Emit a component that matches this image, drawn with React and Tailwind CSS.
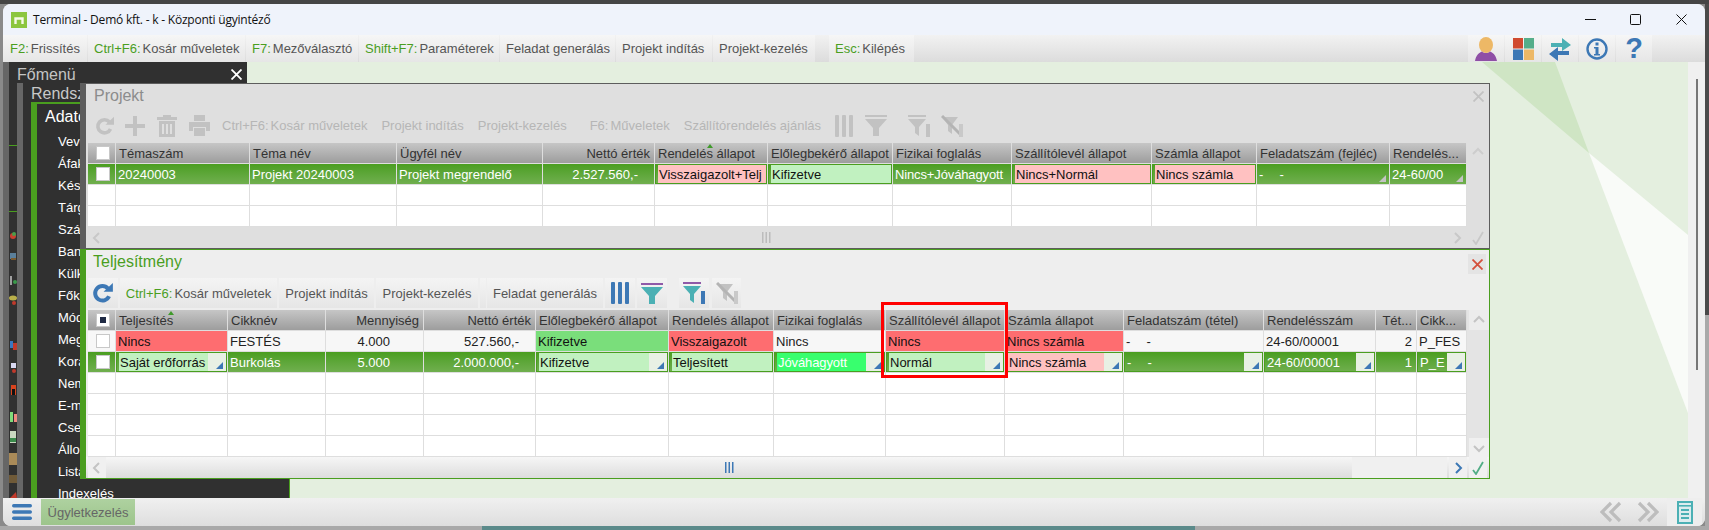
import React from "react";

const BLUE = "#3d78b5";
const TEAL = "#4bb0b4";
const PURPLE = "#8f5aa8";
const OFF = "#c2c2c2";

function Redo({ c = BLUE, size = 20 }) {
  return (
    <svg width={size} height={size} viewBox="0 0 20 20" fill="none">
      <path d="M14.5 6A6.6 6.6 0 1 0 15.5 13" stroke={c} strokeWidth="3.6" />
      <polygon points="10.5,8.8 19,8.8 19,0.8" fill={c} />
    </svg>
  );
}
function Plus() {
  return (
    <svg width="20" height="20" viewBox="0 0 20 20" fill={OFF}>
      <rect x="8" y="0" width="4" height="20" />
      <rect x="0" y="8" width="20" height="4" />
    </svg>
  );
}
function Trash() {
  return (
    <svg width="20" height="22" viewBox="0 0 20 22" fill={OFF}>
      <rect x="6" y="0" width="8" height="2" />
      <rect x="0" y="2" width="20" height="3" />
      <path d="M2 6h16v16H2zM5 9v10h2V9zM9 9v10h2V9zM13 9v10h2V9z" fillRule="evenodd" />
    </svg>
  );
}
function Printer() {
  return (
    <svg width="21" height="21" viewBox="0 0 21 21" fill={OFF}>
      <rect x="5" y="0" width="11" height="6" />
      <path d="M0 7h21v9h-4v-4H4v4H0z" />
      <rect x="5" y="13" width="11" height="8" />
    </svg>
  );
}
function Columns({ c = BLUE }) {
  return (
    <svg width="18" height="22" viewBox="0 0 18 22" fill={c}>
      <rect x="0" y="0" width="4" height="22" rx="1" />
      <rect x="7" y="0" width="4" height="22" rx="1" />
      <rect x="14" y="0" width="4" height="22" rx="1" />
    </svg>
  );
}
function Funnel({ top = PURPLE, c = TEAL }) {
  return (
    <svg width="22" height="21" viewBox="0 0 22 21">
      <rect x="0" y="0" width="22" height="2" fill={top} />
      <polygon points="0,4 22,4 14,13 14,21 8,21 8,13" fill={c} />
    </svg>
  );
}
function FunnelList({ top = PURPLE, c = TEAL, r = BLUE }) {
  return (
    <svg width="22" height="22" viewBox="0 0 22 22">
      <rect x="0" y="0" width="18" height="2" fill={top} />
      <polygon points="0,4 18,4 11,12 11,21 7,18 7,12" fill={c} />
      <rect x="18" y="9" width="4" height="13" fill={r} />
    </svg>
  );
}
function FunnelOff() {
  return (
    <svg width="22" height="22" viewBox="0 0 22 22">
      <polygon points="1,2 17,2 11,10 11,19 7,16 7,10" fill={OFF} />
      <path d="M1 1 L20 20" stroke="#b4b4b4" strokeWidth="3" />
      <rect x="18" y="9" width="4" height="13" fill="#c9c9c9" />
    </svg>
  );
}
function Chevron({ dir, c = "#c4c4c4" }) {
  const d = { up: "M2 9l5-5 5 5", down: "M2 5l5 5 5-5", left: "M9 2L4 7l5 5", right: "M5 2l5 5-5 5" }[dir];
  return (
    <svg width="14" height="14" viewBox="0 0 14 14" fill="none">
      <path d={d} stroke={c} strokeWidth="2" />
    </svg>
  );
}
function Check({ c }) {
  return (
    <svg width="12" height="14" viewBox="0 0 12 14" fill="none">
      <path d="M1 9l3 4 7-12" stroke={c} strokeWidth="1.8" />
    </svg>
  );
}
function Grip({ c }) {
  return (
    <svg width="9" height="11" viewBox="0 0 9 11" fill={c}>
      <rect x="0" y="0" width="1.5" height="11" />
      <rect x="3.5" y="0" width="1.5" height="11" />
      <rect x="7" y="0" width="1.5" height="11" />
    </svg>
  );
}
function Tri({ c = BLUE }) {
  return (
    <svg width="7" height="7" viewBox="0 0 7 7">
      <polygon points="7,0 7,7 0,7" fill={c} />
    </svg>
  );
}

function Key({ k, t }) {
  return (
    <>
      {k && <span className="mr-[2px] text-[#4a9e1f]">{k}</span>}
      {t}
    </>
  );
}

function TopBtn({ k, t, className = "" }) {
  return (
    <div className={`flex h-full items-center whitespace-nowrap bg-linear-to-b from-[#f6f6f6] to-[#e6e6e6] px-[6px] ${className}`}>
      <Key k={k} t={t} />
    </div>
  );
}

function IconBtn({ children }) {
  return <div className="mr-[1px] flex h-full w-[36px] items-center justify-center bg-linear-to-b from-[#f6f6f6] to-[#e6e6e6]">{children}</div>;
}

function CheckBox({ mixed }) {
  return (
    <div className="mx-auto flex h-[14px] w-[14px] items-center justify-center border border-[#c8c8c8] bg-white">
      {mixed && <div className="h-[6px] w-[6px] bg-[#1f2a44]" />}
    </div>
  );
}

function Sort() {
  return (
    <svg className="absolute left-[52px] top-[1px]" width="6" height="4" viewBox="0 0 6 4">
      <polygon points="3,0 6,4 0,4" fill="#3f9a2a" />
    </svg>
  );
}

function Head({ children, right, sort }) {
  return (
    <div className={`relative flex items-center overflow-hidden whitespace-nowrap border-r border-b border-[#dedede] bg-linear-to-b from-[#c6c6c6] to-[#9d9d9d] text-[#333] ${right ? "justify-end pr-[4px]" : "pl-[3px]"}`}>
      {children}
      {sort && <Sort />}
    </div>
  );
}

function Cell({ children, tone = "", right, pr = "", drop, tri, boxed }) {
  return (
    <div className={`flex min-w-0 overflow-hidden whitespace-nowrap border-r border-b border-[#dedede] ${tone}`}>
      <div className={`flex min-w-0 flex-1 overflow-hidden ${boxed ? "border border-[#4a9e1f]" : ""}`}>
        <div className={`flex min-w-0 flex-1 items-center overflow-hidden ${right ? `justify-end ${pr}` : "pl-[2px]"}`}>{children}</div>
        {drop && (
          <div className="flex w-[18px] shrink-0 items-end justify-end bg-[#e8f0e4] pr-[3px] pb-[2px]">
            <Tri />
          </div>
        )}
        {tri && (
          <div className="flex w-[18px] shrink-0 items-end justify-end pr-[3px] pb-[2px]">
            <Tri c="#c4c4c4" />
          </div>
        )}
      </div>
    </div>
  );
}

function Dashes() {
  return <span className="whitespace-pre tracking-[-0.3px]">-     -</span>;
}

const SEL = "bg-linear-to-b from-[#4a9e1f] to-[#70af4e] text-white";
const LG = "bg-[#c1f1c0] text-[#111]";
const LR = "bg-[#ffc1c1] text-[#111]";
const RED = "bg-[#fe6d70] text-[#111]";
const PLAIN = "bg-[#f7f7f7] text-[#222]";

const topHeads = ["Témaszám", "Téma név", "Ügyfél név"];

function Empty({ n }) {
  return Array.from({ length: n }, (_, i) => <div key={i} className="border-r border-b border-[#dedede] bg-white" />);
}

function ProjektWindow() {
  return (
    <section className="absolute left-[77px] top-[21px] z-10 flex h-[166px] w-[1410px] flex-col border-t border-r border-b border-l-[6px] border-[#5d5d5d] bg-[#dfdfdf]">
      <div className="flex h-[24px] items-center justify-between pl-[8px] pr-[5px] text-[16px] text-[#8c8c8c]">
        <span>Projekt</span>
        <svg width="11" height="11" viewBox="0 0 11 11" fill="none">
          <path d="M0.5 0.5l10 10M10.5 0.5l-10 10" stroke="#c2c2c2" strokeWidth="1.8" />
        </svg>
      </div>
      <div className="flex h-[35px] items-center pl-[9px] text-[#b6b6b6]">
        <Redo c={OFF} />
        <div className="ml-[10px]"><Plus /></div>
        <div className="ml-[12px]"><Trash /></div>
        <div className="ml-[12px]"><Printer /></div>
        <span className="ml-[12px] whitespace-nowrap"><span className="mr-[2px]">Ctrl+F6:</span>Kosár műveletek</span>
        <span className="ml-[14px] whitespace-nowrap">Projekt indítás</span>
        <span className="ml-[14px] whitespace-nowrap">Projekt-kezelés</span>
        <span className="ml-[23px] whitespace-nowrap"><span className="mr-[2px]">F6:</span>Műveletek</span>
        <span className="ml-[14px] whitespace-nowrap">Szállítórendelés ajánlás</span>
        <div className="ml-[14px]"><Columns c={OFF} /></div>
        <div className="ml-[12px]"><Funnel top={OFF} c={OFF} /></div>
        <div className="ml-[21px]"><FunnelList top={OFF} c={OFF} r={OFF} /></div>
        <div className="ml-[11px]"><FunnelOff /></div>
      </div>
      <div className="flex h-[84px] pl-[2px]">
        <div className="grid w-[1379px] grid-cols-[28px_134px_147px_146px_112px_113px_125px_119px_140px_105px_133px_77px] auto-rows-[21px]">
          <Head><CheckBox /></Head>
          {topHeads.map((h) => <Head key={h}>{h}</Head>)}
          <Head right>Nettó érték</Head>
          <Head sort>Rendelés állapot</Head>
          <Head>Előlegbekérő állapot</Head>
          <Head>Fizikai foglalás</Head>
          <Head>Szállítólevél állapot</Head>
          <Head>Számla állapot</Head>
          <Head>Feladatszám (fejléc)</Head>
          <Head>Rendelés...</Head>

          <Cell tone={SEL}><div className="w-full"><CheckBox /></div></Cell>
          <Cell tone={SEL}>20240003</Cell>
          <Cell tone={SEL}>Projekt 20240003</Cell>
          <Cell tone={SEL}>Projekt megrendelő</Cell>
          <Cell tone={SEL} right pr="pr-[16px]">2.527.560,-</Cell>
          <Cell tone={SEL + " !text-[#111]"} boxed><div className={`flex h-full w-full items-center overflow-hidden pl-[1px] ${LR}`}>Visszaigazolt+Telj</div></Cell>
          <Cell tone={SEL + " !text-[#111]"} boxed><div className={`flex h-full w-full items-center pl-[1px] ${LG}`}>Kifizetve</div></Cell>
          <Cell tone={SEL}><span className="tracking-[-0.13px]">Nincs+Jóváhagyott</span></Cell>
          <Cell tone={SEL + " !text-[#111]"} boxed><div className={`flex h-full w-full items-center pl-[1px] ${LR}`}>Nincs+Normál</div></Cell>
          <Cell tone={SEL + " !text-[#111]"} boxed><div className={`flex h-full w-full items-center pl-[1px] ${LR}`}>Nincs számla</div></Cell>
          <Cell tone={SEL} tri><Dashes /></Cell>
          <Cell tone={SEL} tri>24-60/00</Cell>

          <Empty n={24} />
        </div>
        <div className="flex w-[22px] justify-center pt-[2px]"><Chevron dir="up" c="#cdcdcd" /></div>
      </div>
      <div className="flex h-[21px] items-center pl-[4px] pr-[5px]">
        <Chevron dir="left" c="#c8c8c8" />
        <div className="ml-[658px]"><Grip c="#bcbcbc" /></div>
        <div className="ml-auto flex items-center gap-[8px]">
          <Chevron dir="right" c="#c8c8c8" />
          <Check c="#c8c8c8" />
        </div>
      </div>
    </section>
  );
}

function BarBtn({ children, className = "" }) {
  return <div className={`flex h-[30px] items-center justify-center whitespace-nowrap bg-linear-to-b from-[#f4f4f4] to-[#e6e6e6] ${className}`}>{children}</div>;
}

function TeljesitmenyWindow() {
  return (
    <section className="absolute left-[77px] top-[187px] z-10 flex h-[230px] w-[1410px] flex-col border-t border-r border-b border-l-[6px] border-[#4a9e1f] bg-[#eeeeee]">
      <div className="flex h-[28px] items-center justify-between pl-[7px] pr-[3px] text-[16px] text-[#4a9e1f]">
        <span className="mb-[4px]">Teljesítmény</span>
        <div className="flex h-[20px] w-[18px] items-center justify-center bg-[#e4e4e4]">
          <svg width="11" height="11" viewBox="0 0 11 11" fill="none">
            <path d="M0.5 0.5l10 10M10.5 0.5l-10 10" stroke="#d4503c" strokeWidth="1.8" />
          </svg>
        </div>
      </div>
      <div className="flex h-[32px] items-start pl-[2px] text-[#555]">
        <BarBtn className="w-[30px]"><Redo size={22} /></BarBtn>
        <BarBtn className="ml-[2px] w-[157px]"><Key k="Ctrl+F6:" t="Kosár műveletek" /></BarBtn>
        <BarBtn className="ml-[2px] w-[95px]">Projekt indítás</BarBtn>
        <BarBtn className="ml-[2px] w-[102px]">Projekt-kezelés</BarBtn>
        <BarBtn className="ml-[2px] w-[6px]" />
        <BarBtn className="ml-[1px] w-[116px]">Feladat generálás</BarBtn>
        <BarBtn className="ml-[2px] w-[30px]"><Columns /></BarBtn>
        <BarBtn className="ml-[2px] w-[30px]"><Funnel /></BarBtn>
        <BarBtn className="ml-[12px] w-[30px]"><FunnelList /></BarBtn>
        <BarBtn className="ml-[3px] w-[29px]"><FunnelOff /></BarBtn>
      </div>
      <div className="flex h-[147px] pl-[2px]">
        <div className="grid w-[1379px] grid-cols-[28px_112px_98px_98px_112px_133px_105px_112px_119px_119px_140px_112px_41px_50px] auto-rows-[21px]">
          <Head><CheckBox mixed /></Head>
          <Head sort>Teljesítés</Head>
          <Head>Cikknév</Head>
          <Head right>Mennyiség</Head>
          <Head right>Nettó érték</Head>
          <Head>Előlegbekérő állapot</Head>
          <Head>Rendelés állapot</Head>
          <Head>Fizikai foglalás</Head>
          <Head>Szállítólevél állapot</Head>
          <Head>Számla állapot</Head>
          <Head>Feladatszám (tétel)</Head>
          <Head>Rendelésszám</Head>
          <Head right>Tét...</Head>
          <Head>Cikk...</Head>

          <Cell tone={PLAIN}><div className="w-full"><CheckBox /></div></Cell>
          <Cell tone={RED}>Nincs</Cell>
          <Cell tone={PLAIN}>FESTÉS</Cell>
          <Cell tone={PLAIN} right pr="pr-[33px]">4.000</Cell>
          <Cell tone={PLAIN} right pr="pr-[16px]">527.560,-</Cell>
          <Cell tone="bg-[#7ade7b] text-[#111]">Kifizetve</Cell>
          <Cell tone={RED}>Visszaigazolt</Cell>
          <Cell tone={PLAIN}>Nincs</Cell>
          <Cell tone={RED}>Nincs</Cell>
          <Cell tone={RED}>Nincs számla</Cell>
          <Cell tone={PLAIN}><Dashes /></Cell>
          <Cell tone={PLAIN}>24-60/00001</Cell>
          <Cell tone={PLAIN} right pr="pr-[4px]">2</Cell>
          <Cell tone={PLAIN}>P_FES</Cell>

          <Cell tone={SEL}><div className="w-full"><CheckBox /></div></Cell>
          <Cell tone={`${SEL} !text-[#111]`} boxed drop><div className={`flex h-full w-full items-center pl-[1px] ${LG}`}>Saját erőforrás</div></Cell>
          <Cell tone={SEL}>Burkolás</Cell>
          <Cell tone={SEL} right pr="pr-[33px]">5.000</Cell>
          <Cell tone={SEL} right pr="pr-[16px]">2.000.000,-</Cell>
          <Cell tone={`${SEL} !text-[#111]`} boxed drop><div className={`flex h-full w-full items-center pl-[1px] ${LG}`}>Kifizetve</div></Cell>
          <Cell tone={`${SEL} !text-[#111]`} boxed><div className={`flex h-full w-full items-center pl-[1px] ${LG}`}>Teljesített</div></Cell>
          <Cell tone={SEL} boxed drop><div className="flex h-full w-full items-center bg-[#38ff6e] pl-[1px] tracking-[-0.1px]">Jóváhagyott</div></Cell>
          <Cell tone={`${SEL} !text-[#111]`} boxed drop><div className={`flex h-full w-full items-center pl-[1px] ${LG}`}>Normál</div></Cell>
          <Cell tone={`${SEL} !text-[#111]`} boxed drop><div className={`flex h-full w-full items-center pl-[1px] ${LR}`}>Nincs számla</div></Cell>
          <Cell tone={SEL} boxed drop><Dashes /></Cell>
          <Cell tone={SEL} boxed drop>24-60/00001</Cell>
          <Cell tone={SEL} right pr="pr-[4px]">1</Cell>
          <Cell tone={SEL} boxed drop>P_E</Cell>

          <Empty n={56} />
        </div>
        <div className="flex w-[22px] flex-col items-center justify-between bg-[#e4e4e4] pl-[1px]">
          <div className="flex h-[20px] w-[20px] items-center justify-center bg-[#ececec]"><Chevron dir="up" /></div>
          <div className="flex h-[19px] w-[20px] items-center justify-center bg-[#f0f0f0]"><Chevron dir="down" /></div>
        </div>
      </div>
      <div className="flex h-[21px] items-stretch bg-linear-to-b from-[#f6f6f6] to-[#dddddd] pl-[2px] pr-[2px]">
        <div className="flex w-[18px] items-center justify-center bg-[#f0f0f0]"><Chevron dir="left" /></div>
        <div className="ml-[619px] flex items-center"><Grip c={BLUE} /></div>
        <div className="ml-[618px] w-[95px] bg-[#f0f0f0]" />
        <div className="ml-[2px] flex w-[18px] items-center justify-center bg-[#f0f0f0]"><Chevron dir="right" c={BLUE} /></div>
        <div className="ml-[2px] flex w-[18px] items-center justify-center bg-[#f0f0f0]"><Check c="#52ad86" /></div>
      </div>
      <div className="pointer-events-none absolute left-[795px] top-[52px] z-20 h-[76px] w-[127px] border-[3px] border-[#ff0000]" />
    </section>
  );
}

function TaskStrip() {
  return (
    <svg className="shrink-0" width="8" height="416" viewBox="0 0 8 416">
      <rect x="0" y="62" width="8" height="1" fill="#4a9e1f" />
      <rect x="0" y="128" width="8" height="1" fill="#4a9e1f" />
      <circle cx="4" cy="153" r="3" fill="#c9402f" /><circle cx="5" cy="151" r="2" fill="#4a9e4a" />
      <rect x="1" y="170" width="6" height="6" fill="#5a7f9a" /><rect x="2" y="175" width="5" height="2" fill="#7a5a30" />
      <rect x="1" y="193" width="2" height="9" fill="#a0a0a0" /><circle cx="6" cy="199" r="2" fill="#3a9a4a" />
      <ellipse cx="4" cy="215" rx="4" ry="2.5" fill="#b9b04a" /><circle cx="5" cy="220" r="2" fill="#c0392b" />
      <rect x="1" y="258" width="3" height="7" fill="#3a78c0" /><rect x="4" y="260" width="4" height="7" fill="#c0392b" />
      <rect x="2" y="280" width="5" height="5" fill="#d8d8f0" /><circle cx="5" cy="288" r="2" fill="#c0392b" />
      <rect x="2" y="302" width="5" height="10" fill="#d8441e" /><rect x="3" y="306" width="3" height="6" fill="#111" />
      <rect x="1" y="329" width="3" height="10" fill="#7fdc7b" /><rect x="5" y="331" width="3" height="8" fill="#f08a80" />
      <rect x="1" y="348" width="6" height="12" fill="#c9d8c0" /><rect x="1" y="355" width="6" height="4" fill="#3a8a4a" />
      <rect x="0" y="370" width="8" height="12" fill="#a98a58" />
      <rect x="0" y="392" width="8" height="8" fill="#6f5a38" />
      <polygon points="1,415 7,409 8,415" fill="#c0392b" />
    </svg>
  );
}

const menuItems = ["Vevők", "Áfakulcs", "Készlet", "Tárgyi", "Számla", "Bank", "Külker", "Főkönyv", "Módszer", "Megbízás", "Korábbi", "Nem", "E-mail", "Csekk", "Állomány", "Lista", "Indexelés"];

function MainMenu() {
  return (
    <aside className="absolute inset-y-0 left-0 flex w-[244px] flex-col overflow-hidden border-l-[6px] border-[#666666] bg-[#303030]">
      <div className="flex h-[21px] shrink-0 items-center justify-between pl-[8px] pr-[5px] pt-[4px] text-[16px] text-[#c4c4c4]">
        <span>Főmenü</span>
        <svg width="11" height="11" viewBox="0 0 11 11" fill="none">
          <path d="M0.5 0.5l10 10M10.5 0.5l-10 10" stroke="#fff" strokeWidth="1.8" />
        </svg>
      </div>
      <div className="flex flex-1">
        <TaskStrip />
        <div className="flex-1 border-l-[6px] border-[#666] pl-[8px]">
          <div className="flex h-[19px] items-center pt-[3px] text-[16px] text-[#c8c8c8]">Rendszer</div>
          <div className="border-t-2 border-l-[6px] border-[#4a9e1f] pl-[8px] pt-[2px] text-white">
            <div className="flex h-[25px] items-center pb-[4px] text-[16px]">Adatok</div>
            <ul className="pl-[13px] leading-[22px]">
              {menuItems.map((m) => <li key={m}>{m}</li>)}
            </ul>
          </div>
        </div>
      </div>
    </aside>
  );
}

function Backdrop() {
  return (
    <svg className="absolute inset-0" width="1685" height="436" viewBox="0 0 1685 436">
      <polygon points="1479,0 1552,0 1586,91" fill="#cfe5c4" />
      <polygon points="1586,91 1685,173 1685,351" fill="#f9fbf8" />
    </svg>
  );
}

export default function App() {
  return (
    <div className="flex h-[530px] w-[1709px] flex-col overflow-hidden bg-[#a9a9a9] text-[13px] leading-none" style={{ fontFamily: '"Liberation Sans", Arial, sans-serif' }}>
      <div className="h-[4px] shrink-0 bg-[#454545]" />
      <div className="flex h-[522px] shrink-0 bg-[#8a8a8a]">
        <div className="w-[3px]" />
        <div className="flex w-[1702px] flex-col overflow-hidden rounded-t-lg rounded-br-lg rounded-bl-lg bg-[#f0f0f0]">
          <header className="flex h-[31px] shrink-0 items-center justify-between bg-[#eff3fb] pl-[8px]">
            <div className="flex items-center">
              <svg width="16" height="16" viewBox="0 0 16 16">
                <rect width="16" height="16" fill="#8cc63f" />
                <path d="M4.5 12V6.5h7V12" fill="none" stroke="#f6fae8" strokeWidth="2.4" />
              </svg>
              <span className="ml-[6px] text-[12px] tracking-[-0.22px] text-[#111]" style={{ fontFamily: '"Open Sans", sans-serif' }}>Terminal - Demó kft. - k - Központi ügyintéző</span>
            </div>
            <div className="flex items-center text-[#111]">
              <svg width="11" height="11" viewBox="0 0 11 11"><rect x="0" y="5" width="11" height="1" fill="#111" /></svg>
              <svg className="ml-[34px]" width="11" height="11" viewBox="0 0 11 11" fill="none"><rect x="0.5" y="0.5" width="10" height="10" rx="1" stroke="#111" /></svg>
              <svg className="ml-[35px] mr-[18px]" width="11" height="11" viewBox="0 0 11 11" fill="none"><path d="M0.5 0.5l10 10M10.5 0.5l-10 10" stroke="#111" /></svg>
            </div>
          </header>
          <nav className="flex h-[27px] shrink-0 items-center bg-linear-to-b from-[#f2f2f2] to-[#dcdcdc] text-[#555]">
            <TopBtn k="F2:" t="Frissítés" className="mr-[1px] w-[84px] pl-[7px]" />
            <TopBtn k="Ctrl+F6:" t="Kosár műveletek" className="mr-[1px] w-[157px]" />
            <TopBtn k="F7:" t="Mezőválasztó" className="mr-[1px] w-[112px]" />
            <TopBtn k="Shift+F7:" t="Paraméterek" className="mr-[1px] w-[140px]" />
            <TopBtn t="Feladat generálás" className="mr-[1px] w-[115px]" />
            <TopBtn t="Projekt indítás" className="mr-[1px] w-[96px]" />
            <TopBtn t="Projekt-kezelés" className="w-[102px]" />
            <TopBtn k="Esc:" t="Kilépés" className="ml-[14px] w-[85px]" />
            <div className="ml-auto mr-[52px] flex h-full">
              <IconBtn>
                <svg width="22" height="24" viewBox="0 0 22 24">
                  <ellipse cx="11" cy="8" rx="7" ry="8" fill="#edb866" />
                  <path d="M0 24C1 18 4 16 7 14.5C9 16.5 13 16.5 15 14.5C18 16 21 18 22 24Z" fill="#8f4fa6" />
                </svg>
              </IconBtn>
              <IconBtn>
                <svg width="21" height="22" viewBox="0 0 21 22">
                  <rect x="0" y="0" width="10" height="10.5" fill="#d04a2f" />
                  <rect x="11" y="0" width="10" height="10.5" fill="#55ae8a" />
                  <rect x="0" y="11.5" width="10" height="10.5" fill={BLUE} />
                  <rect x="11" y="11.5" width="10" height="10.5" fill="#edb866" />
                </svg>
              </IconBtn>
              <IconBtn>
                <svg width="22" height="24" viewBox="0 0 22 24">
                  <polygon points="2,6 13,6 13,1 22,8 13,14 13,10 2,10" fill={TEAL} />
                  <polygon points="20,14 9,14 9,10 0,17 9,24 9,18 20,18" fill={BLUE} />
                </svg>
              </IconBtn>
              <IconBtn>
                <svg width="22" height="22" viewBox="0 0 22 22" fill="none">
                  <circle cx="11" cy="11" r="9.5" stroke={BLUE} strokeWidth="2.4" />
                  <rect x="9.5" y="4.5" width="3" height="3" fill={BLUE} />
                  <path d="M8 9h4.5v7H14v1.5H8V16h1.5v-5.5H8z" fill={BLUE} />
                </svg>
              </IconBtn>
              <IconBtn><span className="text-[29px] font-bold leading-none text-[#3d78b5]">?</span></IconBtn>
            </div>
          </nav>
          <main className="flex min-h-0 flex-1">
            <div className="relative h-[436px] w-[1685px] shrink-0 bg-[#e4efdf]">
              <Backdrop />
              <MainMenu />
              <div className="absolute bottom-0 left-[244px] h-[20px] w-[43px] border-r border-[#4a9e1f] bg-[#303030]" />
              <ProjektWindow />
              <TeljesitmenyWindow />
            </div>
            <div className="flex flex-1 pt-[17px] pl-[8px]">
              <div className="h-[291px] w-[2px] bg-[#777]" />
            </div>
          </main>
          <footer className="flex h-[28px] shrink-0 items-center bg-linear-to-b from-[#f0f0f0] to-[#dedede] pl-[9px]">
            <svg width="20" height="18" viewBox="0 0 20 18" fill={BLUE}>
              <rect x="0" y="1" width="20" height="3.4" rx="1.7" />
              <rect x="0" y="7.3" width="20" height="3.4" rx="1.7" />
              <rect x="0" y="13.6" width="20" height="3.4" rx="1.7" />
            </svg>
            <div className="ml-[9px] flex h-[26px] w-[94px] items-center justify-center bg-linear-to-b from-[#aed1a0] to-[#9dc48b] text-[#666]">Ügyletkezelés</div>
            <div className="ml-auto flex h-full items-center">
              <svg width="22" height="22" viewBox="0 0 22 22" fill="none" stroke="#bdbdbd" strokeWidth="3.2">
                <path d="M11 2L2 11l9 9M20 2l-9 9 9 9" />
              </svg>
              <svg className="ml-[15px]" width="22" height="22" viewBox="0 0 22 22" fill="none" stroke="#bdbdbd" strokeWidth="3.2">
                <path d="M2 2l9 9-9 9M11 2l9 9-9 9" />
              </svg>
              <div className="ml-[8px] mr-[3px] flex h-full w-[35px] items-center justify-center bg-[#eeeeee]">
                <svg width="16" height="23" viewBox="0 0 16 23" fill="none">
                  <rect x="1" y="1" width="14" height="21" fill="#dcecee" stroke={TEAL} strokeWidth="2" />
                  <rect x="1" y="4" width="14" height="1.6" fill={TEAL} />
                  <rect x="4" y="8" width="8" height="2" fill={TEAL} />
                  <rect x="4" y="12" width="8" height="2" fill={TEAL} />
                  <rect x="4" y="16" width="8" height="2" fill={TEAL} />
                </svg>
              </div>
            </div>
          </footer>
        </div>
        <div className="flex w-[4px] flex-col">
          <div className="h-[311px] bg-[#4a4a4a]" />
          <div className="flex-1 bg-[#a9a9a9]" />
        </div>
      </div>
      <div className="flex h-[4px] shrink-0">
        <div className="w-[482px]" />
        <div className="w-[713px] bg-[#5b8a8a]" />
      </div>
    </div>
  );
}
